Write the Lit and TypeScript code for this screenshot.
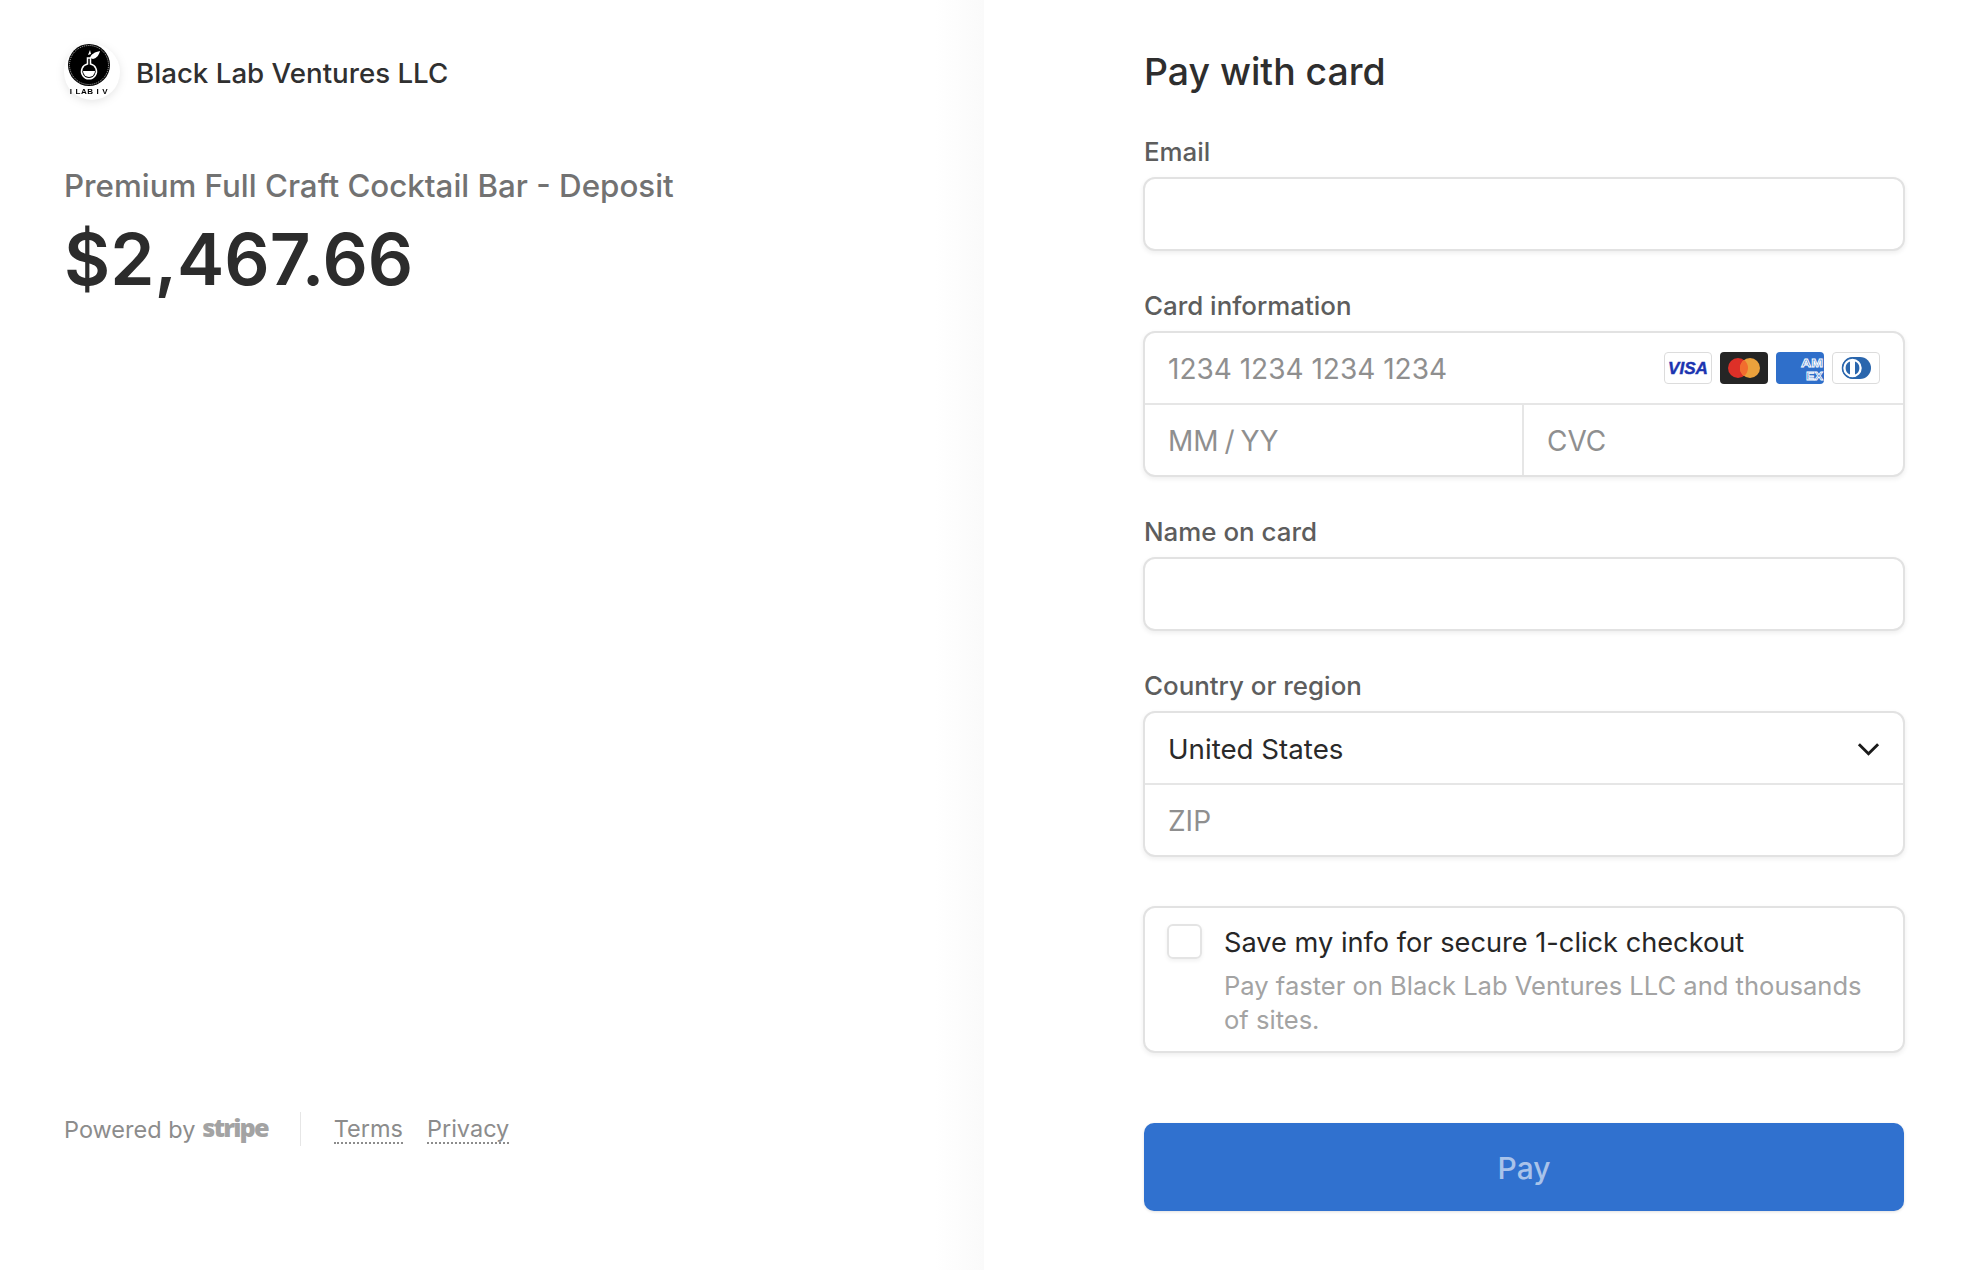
import { LitElement, html, css } from "lit";
import { customElement } from "lit/decorators.js";

const visa = html`<svg class="brand" viewBox="0 0 48 32"><rect x=".5" y=".5" width="47" height="31" rx="3.5" fill="#fff" stroke="#dcdcdc"/><text x="24" y="21.5" text-anchor="middle" font-family="Liberation Sans" font-weight="700" font-style="italic" font-size="16.5" fill="#1b34b0" stroke="#1b34b0" stroke-width=".4" textLength="40" lengthAdjust="spacingAndGlyphs">VISA</text></svg>`;
const mc = html`<svg class="brand" viewBox="0 0 48 32"><rect width="48" height="32" rx="4" fill="#252525"/><circle cx="18" cy="16" r="10" fill="#dd3028"/><circle cx="30" cy="16" r="10" fill="#eba13c"/><path d="M24 8a10 10 0 0 1 0 16a10 10 0 0 1 0-16z" fill="#f26d2e"/></svg>`;
const amex = html`<svg class="brand" viewBox="0 0 48 32"><rect width="48" height="32" rx="4" fill="#2f6fca"/><g font-family="Liberation Sans" font-weight="700" font-size="11.5" fill="#2f6fca" stroke="#fff" stroke-width=".8"><text x="25" y="15" textLength="22" lengthAdjust="spacingAndGlyphs">AM</text><text x="30" y="28.2" textLength="17" lengthAdjust="spacingAndGlyphs">EX</text></g></svg>`;
const diners = html`<svg class="brand" viewBox="0 0 48 32"><rect x=".5" y=".5" width="47" height="31" rx="3.5" fill="#fff" stroke="#dcdcdc"/><path d="M21 5h7a11 11 0 0 1 0 22h-7a11 11 0 0 1 0-22z" fill="#2a66ad"/><circle cx="20.5" cy="16" r="10" fill="#fff" stroke="#2a66ad" stroke-width="1.5"/><path d="M18 9.5v13a7 7 0 0 1 0-13zM23 9.5a7 7 0 0 1 0 13z" fill="#2a66ad"/></svg>`;
const logo = html`<svg class="logo" viewBox="0 0 56 56"><circle cx="28" cy="28" r="28" fill="#fff"/><circle cx="25" cy="21" r="21" fill="#000"/><circle cx="25" cy="21" r="19.5" fill="none" stroke="#fff" stroke-width=".7" stroke-dasharray="1 1"/><path d="M23.5 20v-6h3v6a7.5 7.5 0 1 1-3 0z" fill="#000" stroke="#fff" stroke-width="1.5"/><path d="M19 27h12a6 6 0 0 1-12 0z" fill="#fff"/><path d="M26 14c1-4 5-6 10-7c-1 4-3 7-7 8zM24 11l2-5l1 4z" fill="#fff"/><text x="25" y="50" text-anchor="middle" font-family="Liberation Sans" font-weight="700" font-size="8" letter-spacing=".6" fill="#000">I LAB I V</text></svg>`;
const chevron = html`<svg class="chev" viewBox="0 0 24 14"><path d="M2 2l10 10L22 2" fill="none" stroke="#1a1a1a" stroke-width="3"/></svg>`;

@customElement("app-root")
export class AppRoot extends LitElement {
  static styles = css`
    :host { display: block; height: 1270px; overflow: hidden; background: #fff; font-family: Inter, "Liberation Sans", sans-serif; color: #2e2e2e; }
    .page { display: grid; grid-template-columns: 984px 992px; height: 1270px; }
    .left { display: flex; flex-direction: column; padding: 44px 0 0 64px; background: linear-gradient(90deg, #fff 95%, #fafafa 100%); }
    .head { display: flex; align-items: center; gap: 16px; height: 56px; }
    .logo { width: 56px; height: 56px; flex: none; filter: drop-shadow(0 2px 4px rgba(0,0,0,.1)); }
    .company { font-size: 27.7px; font-weight: 450; color: #303030; position: relative; top: 1px; }
    .product { font-size: 31.3px; font-weight: 450; color: #727272; margin-top: 66px; line-height: 40px; }
    .price { font-size: 71px; font-weight: 600; color: #2c2c2c; line-height: 86px; margin-top: 10px; }
    .foot { margin-top: 809px; display: flex; align-items: center; font-size: 23.5px; color: #8c8c8c; height: 36px; }
    .stripe { font-family: "Open Sans", sans-serif; font-weight: 800; font-size: 25.3px; letter-spacing: -1.9px; color: #a3a3a3; margin-left: 7px; position: relative; top: -2px; }
    .sep { width: 1px; height: 34px; background: #e6e6e6; margin: 0 33px 0 32px; }
    .link { color: #8c8c8c; border-bottom: 2px dotted #8c8c8c; line-height: 27px; margin-right: 24px; }
    .right { padding: 0 0 0 160px; width: 760px; }
    h1 { margin: 0 0 40px; padding-top: 48px; padding-bottom: 1px; font-size: 37.4px; font-weight: 500; line-height: 48px; color: #2e2e2e; }
    label { display: block; font-size: 25.9px; font-weight: 450; color: #5d5d5d; line-height: 30px; }
    .label { margin-bottom: 10px; }
    .field { margin-bottom: 40px; }
    .box { border: 2px solid #e2e2e2; border-radius: 12px; box-shadow: 0 2px 5px rgba(0,0,0,.07); background: #fff; margin-left: -1px; margin-right: -1px; }
    .row { height: 70px; box-sizing: border-box; padding: 2px 23px 0; display: flex; align-items: center; font-size: 28px; color: #8f8f8f; }
    .input { height: 70px; }
    .line { border-top: 2px solid #e6e6e6; }
    .row.line { height: 72px; }
    .split { display: grid; grid-template-columns: calc(50% - 2px) 1fr; }
    .split .row { word-spacing: -2px; }
    .split .row + .row { border-left: 2px solid #e6e6e6; }
    .grow { flex: 1; }
    .brands { display: flex; gap: 8px; position: relative; top: -1px; }
    .brand { width: 48px; height: 32px; display: block; }
    .dark { color: #2a2a2a; font-size: 27.7px; }
    .chev { width: 23px; height: 14px; }
    .save { margin-top: 49px; padding: 16px 22px 18px; height: 147px; box-sizing: border-box; display: flex; gap: 22px; }
    .check { width: 31px; height: 31px; flex: none; border: 2px solid #e4e4e4; border-radius: 6px; box-shadow: 0 2px 4px rgba(0,0,0,.06); }
    .save-title { font-size: 27.2px; font-weight: 400; color: #262626; line-height: 36px; padding-top: 1px; }
    .save-sub { font-size: 25.55px; color: #a3a3a3; line-height: 34px; margin-top: 8px; }
    .pay { display: flex; align-items: center; justify-content: center; margin-top: 70px; height: 88px; background: #3071cf; border-radius: 10px; color: #a9c3ea; font-size: 30px; font-weight: 500; box-shadow: 0 1px 3px rgba(0,0,0,.12); padding-top: 2px; box-sizing: border-box; }
  `;

  render() {
    return html`<div class="page">
      <section class="left">
        <div class="head">${logo}<span class="company">Black Lab Ventures LLC</span></div>
        <div class="product">Premium Full Craft Cocktail Bar - Deposit</div>
        <div class="price">$2,467.66</div>
        <div class="foot">
          <span>Powered by</span><span class="stripe">stripe</span>
          <span class="sep"></span>
          <span class="link">Terms</span><span class="link">Privacy</span>
        </div>
      </section>
      <section class="right">
        <h1>Pay with card</h1>
        <div class="field"><label class="label">Email</label><div class="box input"></div></div>
        <div class="field"><label class="label">Card information</label>
          <div class="box">
            <div class="row"><span class="grow">1234 1234 1234 1234</span><span class="brands">${visa}${mc}${amex}${diners}</span></div>
            <div class="split line"><div class="row">MM / YY</div><div class="row">CVC</div></div>
          </div>
        </div>
        <div class="field"><label class="label">Name on card</label><div class="box input"></div></div>
        <div class="field"><label class="label">Country or region</label>
          <div class="box">
            <div class="row dark"><span class="grow">United States</span>${chevron}</div>
            <div class="row line">ZIP</div>
          </div>
        </div>
        <div class="box save">
          <span class="check"></span>
          <div>
            <div class="save-title">Save my info for secure 1-click checkout</div>
            <div class="save-sub">Pay faster on Black Lab Ventures LLC and thousands of sites.</div>
          </div>
        </div>
        <div class="pay">Pay</div>
      </section>
    </div>`;
  }
}
